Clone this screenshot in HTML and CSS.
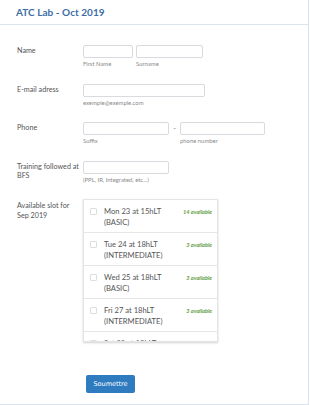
FILE: index.html
```html
<!DOCTYPE html>
<html>
<head>
<meta charset="utf-8">
<link rel="stylesheet" href="styles.css">
</head>
<body>
<div class="card">
  <div class="header"><h1 class="title">ATC Lab - Oct 2019</h1></div>
  <form class="form">
    <div class="row">
      <label class="label">Name</label>
      <div class="fields">
        <div class="field"><div class="input w50"></div><span class="sub">First Name</span></div>
        <div class="field"><div class="input w67"></div><span class="sub">Surname</span></div>
      </div>
    </div>
    <div class="row">
      <label class="label">E-mail adress</label>
      <div class="fields">
        <div class="field"><div class="input w122"></div><span class="sub">exemple@exemple.com</span></div>
      </div>
    </div>
    <div class="row">
      <label class="label">Phone</label>
      <div class="fields">
        <div class="field"><div class="input w86"></div><span class="sub">Suffix</span></div>
        <span class="dash">-</span>
        <div class="field"><div class="input w85"></div><span class="sub">phone number</span></div>
      </div>
    </div>
    <div class="row">
      <label class="label">Training followed at BFS</label>
      <div class="fields">
        <div class="field"><div class="input w86"></div><span class="sub">(PPL, IR, Integrated, etc...)</span></div>
      </div>
    </div>
    <div class="row slots-row">
      <label class="label">Available slot for Sep 2019</label>
      <div class="slots">
        <div class="slot"><span class="check"></span><span class="slot-text">Mon 23 at 15hLT (BASIC)</span><span class="avail">14 available</span></div>
        <div class="slot"><span class="check"></span><span class="slot-text">Tue 24 at 18hLT (INTERMEDIATE)</span><span class="avail">3 available</span></div>
        <div class="slot"><span class="check"></span><span class="slot-text">Wed 25 at 18hLT (BASIC)</span><span class="avail">3 available</span></div>
        <div class="slot"><span class="check"></span><span class="slot-text">Fri 27 at 18hLT (INTERMEDIATE)</span><span class="avail">3 available</span></div>
        <div class="slot"><span class="check"></span><span class="slot-text">Sat 28 at 10hLT (BASIC)</span><span class="avail">5 available</span></div>
      </div>
    </div>
    <div class="actions">
      <button type="button" class="submit">Soumettre</button>
    </div>
  </form>
</div>
</body>
</html>
```
FILE: styles.css
```css
* { box-sizing: border-box; }
html, body { margin: 0; padding: 0; background: #ffffff; }
body { font-family: Lato, "Noto Sans", sans-serif; color: #555; }

.card {
  width: 309px;
  height: 405px;
  border-right: 1px solid #dbe4ee;
  border-bottom: 1px solid #dbe4ee;
  background: #fff;
  overflow: hidden;
}

.header {
  height: 25px;
  border-bottom: 1px solid #dbe4ee;
  padding: 0 16px;
  display: flex;
  align-items: center;
}
.title {
  margin: 0;
  font-size: 10px;
  font-weight: 700;
  color: #3d6ea6;
  letter-spacing: 0.05px;
}

.form {
  padding: 20px 0 0 17px;
  display: flex;
  flex-direction: column;
  gap: 16.5px;
}

.row {
  display: grid;
  grid-template-columns: 66px auto;
  align-items: start;
}

.label {
  font-size: 7.2px;
  line-height: 9.5px;
  color: #555;
  padding-top: 1px;
  padding-right: 2px;
}

.fields {
  display: flex;
  align-items: flex-start;
  gap: 3px;
}
.field { display: flex; flex-direction: column; }
.input {
  height: 13px;
  border: 1px solid #d7dade;
  border-radius: 2px;
  background: #fff;
}
.w50 { width: 50px; }
.w67 { width: 67px; }
.w122 { width: 122px; }
.w86 { width: 86px; }
.w85 { width: 85px; }

.sub {
  font-size: 5.9px;
  line-height: 7px;
  margin-top: 2px;
  color: #8a8a8a;
  white-space: nowrap;
}
.dash {
  font-size: 7px;
  line-height: 13px;
  color: #777;
  width: 5px;
  text-align: center;
}

.slots-row .label { padding-top: 2px; }

.slots {
  width: 135px;
  height: 143px;
  border: 1px solid #e2e4e6;
  overflow: hidden;
  box-shadow: 0 1px 2px rgba(0,0,0,0.18);
}
.slot {
  height: 33px;
  border-bottom: 1px solid #e4e6e8;
  display: flex;
  align-items: flex-start;
  padding: 6px 5px 0 6px;
}
.check {
  flex: none;
  width: 7px;
  height: 7px;
  margin-top: 2px;
  border: 1px solid #dcdfe2;
  border-radius: 1px;
  background: #fff;
}
.slot-text {
  flex: none;
  width: 72px;
  margin-left: 7px;
  font-size: 7.6px;
  line-height: 11px;
  color: #555;
}
.avail {
  margin-left: auto;
  font-size: 5.6px;
  line-height: 11px;
  font-style: italic;
  font-weight: 700;
  color: #5e9d3f;
  white-space: nowrap;
}

.actions {
  padding: 11.5px 0 0 69px;
}
.submit {
  width: 49px;
  height: 18px;
  padding: 0;
  border: none;
  border-radius: 2px;
  background: #2f7bbf;
  color: #fff;
  font-family: "DejaVu Sans", sans-serif;
  font-size: 6.5px;
}
```
